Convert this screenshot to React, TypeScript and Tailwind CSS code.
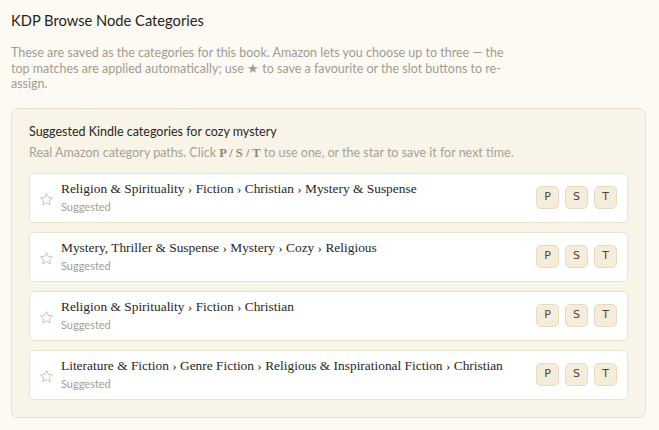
import React from 'react';

const sans = { fontFamily: 'Lato, "Noto Sans", sans-serif' };

const categories = [
  'Religion & Spirituality › Fiction › Christian › Mystery & Suspense',
  'Mystery, Thriller & Suspense › Mystery › Cozy › Religious',
  'Religion & Spirituality › Fiction › Christian',
  'Literature & Fiction › Genre Fiction › Religious & Inspirational Fiction › Christian',
];

const StarIcon: React.FC = () => (
  <svg width="15" height="15" viewBox="0 0 24 24" fill="none" stroke="#cdc3b3" strokeWidth="1.6" strokeLinejoin="round">
    <path d="M12 2.5l2.9 6.2 6.6.7-5 4.5 1.4 6.6L12 17.2l-5.9 3.3 1.4-6.6-5-4.5 6.6-.7z" />
  </svg>
);

const CategoryRow: React.FC<{ path: string }> = ({ path }) => (
  <div className="flex items-center h-[50px] bg-white border border-[#ece3cf] rounded-[5px] pl-[8px] pr-[10px]">
    <div className="w-[16px] flex justify-center mt-[3px]">
      <StarIcon />
    </div>
    <div className="ml-[7px] flex-1 -mt-[1px]">
      <div className="text-[13.4px] leading-[17px] text-[#2a2622]" style={{ fontFamily: '"Liberation Serif", serif' }}>{path}</div>
      <div className="text-[11px] leading-[14px] mt-[3px] text-[#a59d92]" style={sans}>Suggested</div>
    </div>
    <div className="flex gap-[6px]">
      {['P', 'S', 'T'].map((l) => (
        <button
          key={l}
          className="w-[23px] h-[23px] rounded-[5px] bg-[#f5edda] border border-[#e6dbc2] text-[11px] text-[#4a4540] flex items-center justify-center"
          style={{ fontFamily: '"DejaVu Sans", sans-serif' }}
        >
          {l}
        </button>
      ))}
    </div>
  </div>
);

export default function App() {
  return (
    <div className="w-[659px] h-[430px] bg-[#fdfaf4] px-[11px] pt-[10px] overflow-hidden" style={sans}>
      <h1 className="text-[14.7px] leading-[20px] text-[#262320]">KDP Browse Node Categories</h1>
      <p className="mt-[15px] max-w-[510px] text-[12.5px] leading-[15.5px] text-[#a39b90]">
        These are saved as the categories for this book. Amazon lets you choose up to three — the top matches are
        applied automatically; use ★ to save a favourite or the slot buttons to re-assign.
      </p>
      <div className="mt-[16px] w-[635px] border border-[#ebe1c9] bg-[#f8f4e8] rounded-[7px] px-[17px] pt-[15px] pb-[17px]">
        <h2 className="text-[12.5px] leading-[16px] text-[#2a2622]">Suggested Kindle categories for cozy mystery</h2>
        <p className="mt-[5px] text-[12.5px] leading-[16px] text-[#a9a195]">
          Real Amazon category paths. Click{' '}
          <b className="text-[#8f877c]" style={{ fontFamily: '"Liberation Serif", serif' }}>P / S / T</b> to use one,
          or the star to save it for next time.
        </p>
        <div className="mt-[12px] flex flex-col gap-[9px]">
          {categories.map((c) => (
            <CategoryRow key={c} path={c} />
          ))}
        </div>
      </div>
    </div>
  );
}
